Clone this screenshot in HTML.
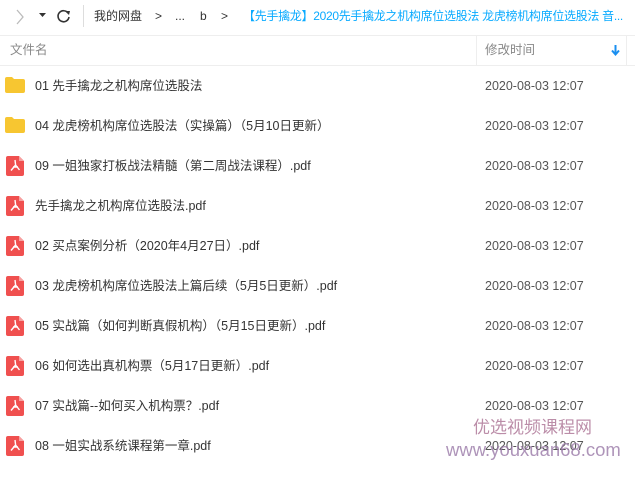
<!DOCTYPE html>
<html><head><meta charset="utf-8"><style>
body{margin:0;width:635px;height:478px;overflow:hidden;background:#fff;font-family:"Liberation Sans","Noto Sans CJK SC",sans-serif;color:#333;position:relative}
.a{position:absolute;white-space:nowrap;line-height:16px}
.tb{font-size:12px;top:8px}
.row{position:absolute;left:0;width:635px;height:40px}
.row .n{position:absolute;left:35px;top:12px;font-size:12.5px;line-height:16px;color:#333;white-space:nowrap}
.row .d{position:absolute;left:485px;top:12px;font-size:12.5px;line-height:16px;color:#555;white-space:nowrap}
.fold{position:absolute;left:5px;top:11px;width:20px;height:16px}
.pdf{position:absolute;left:6px;top:10px;width:18px;height:20px}
</style></head><body>
<svg class="a" style="left:14px;top:8px" width="12" height="18"><path d="M3 2 L9 9 L3 16" stroke="#bbb" stroke-width="1.3" fill="none"/></svg>
<svg class="a" style="left:39px;top:13px" width="8" height="6"><path d="M0 0 H7 L3.5 4Z" fill="#333"/></svg>
<svg class="a" style="left:56px;top:8px" width="16" height="16"><path d="M12 5 A5.5 5.5 0 1 0 13 9" stroke="#333" stroke-width="1.6" fill="none"/><path d="M9 3 L14 3 L13 7Z" fill="#333"/></svg>
<div class="a" style="left:83px;top:5px;width:1px;height:22px;background:#ddd"></div>
<div class="a tb" style="left:94px">我的网盘</div>
<div class="a tb" style="left:155px">&gt;</div>
<div class="a tb" style="left:175px">...</div>
<div class="a tb" style="left:200px">b</div>
<div class="a tb" style="left:221px">&gt;</div>
<div class="a tb" style="left:243px;width:388px;overflow:hidden;color:#09aaff;font-size:12px;letter-spacing:-0.3px">【先手擒龙】2020先手擒龙之机构席位选股法 龙虎榜机构席位选股法 音...</div>
<div class="a" style="left:0;top:35px;width:635px;height:1px;background:#eee"></div>
<div class="a" style="left:10px;top:42px;font-size:12.5px;color:#888">文件名</div>
<div class="a" style="left:476px;top:35px;width:1px;height:30px;background:#eee"></div>
<div class="a" style="left:626px;top:35px;width:1px;height:30px;background:#eee"></div>
<div class="a" style="left:485px;top:42px;font-size:12.5px;color:#888">修改时间</div>
<svg class="a" style="left:611px;top:45px" width="9" height="11"><path d="M4.5 0 V9 M1 5.5 L4.5 9.5 L8 5.5" stroke="#1a8ff0" stroke-width="2" fill="none"/></svg>
<div class="a" style="left:0;top:65px;width:635px;height:1px;background:#eee"></div>
<div id="rows"></div>
<div class="row" style="top:66px"><svg class="fold" viewBox="0 0 20 16"><path d="M0 2 Q0 0 2 0 H7 L9 2 H18 Q20 2 20 4 V14 Q20 16 18 16 H2 Q0 16 0 14Z" fill="#f7c631"/></svg><div class="n">01 先手擒龙之机构席位选股法</div><div class="d">2020-08-03 12:07</div></div>
<div class="row" style="top:106px"><svg class="fold" viewBox="0 0 20 16"><path d="M0 2 Q0 0 2 0 H7 L9 2 H18 Q20 2 20 4 V14 Q20 16 18 16 H2 Q0 16 0 14Z" fill="#f7c631"/></svg><div class="n">04 龙虎榜机构席位选股法（实操篇）（5月10日更新）</div><div class="d">2020-08-03 12:07</div></div>
<script>
var p=["09 一姐独家打板战法精髓（第二周战法课程）.pdf","先手擒龙之机构席位选股法.pdf","02 买点案例分析（2020年4月27日）.pdf","03 龙虎榜机构席位选股法上篇后续（5月5日更新）.pdf","05 实战篇（如何判断真假机构）（5月15日更新）.pdf","06 如何选出真机构票（5月17日更新）.pdf","07 实战篇--如何买入机构票？.pdf","08 一姐实战系统课程第一章.pdf"];
var h="";p.forEach(function(t,i){h+='<div class="row" style="top:'+(146+i*40)+'px"><svg class="pdf" viewBox="0 0 18 20"><path d="M2 0 H13 L18 5 V18 Q18 20 16 20 H2 Q0 20 0 18 V2 Q0 0 2 0Z" fill="#f0504f"/><path d="M13 0 V5 H18Z" fill="#f7a0a0"/><path d="M9 4 L9.6 9 L13.5 14 M9.6 9 L5 14.5 M7 11 H12" stroke="#fff" stroke-width="1.4" fill="none"/></svg><div class="n">'+t+'</div><div class="d">2020-08-03 12:07</div></div>'});
document.getElementById("rows").innerHTML=h;
</script>
<div class="a" style="left:473px;top:418px;font-size:17px;line-height:20px;color:#b07a9a;opacity:.85">优选视频课程网</div>
<div class="a" style="left:446px;top:439px;font-size:18.5px;line-height:22px;color:#9a7aa8;opacity:.8">www.youxuan68.com</div>
</body></html>
